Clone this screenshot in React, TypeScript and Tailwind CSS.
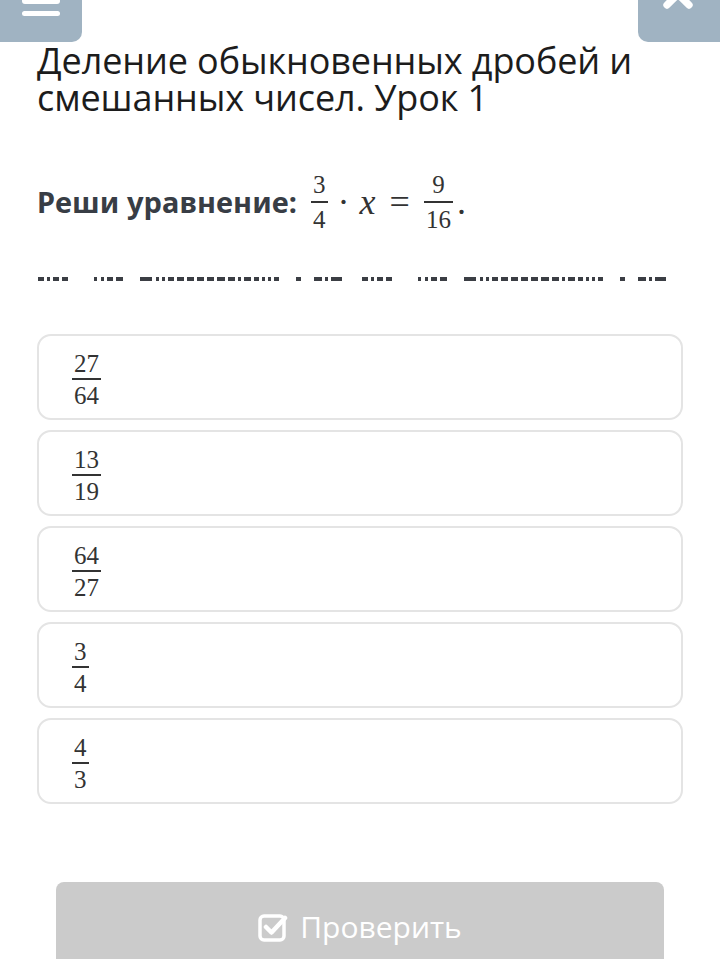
import { X } from "lucide-react";

const dashes: [number, number][] = [
  [0, 6], [9, 3], [15, 6], [24, 6], [56, 3], [63, 3], [69, 6], [78, 7],
  [102, 12], [118, 3], [124, 3], [130, 6], [139, 7], [149, 7], [159, 7],
  [169, 7], [179, 8], [190, 7], [200, 3], [206, 7], [216, 5], [224, 3],
  [230, 3], [236, 5], [258, 5], [276, 8], [287, 3], [293, 11],
];

const options = [
  ["27", "64"],
  ["13", "19"],
  ["64", "27"],
  ["3", "4"],
  ["4", "3"],
];

function Frac({ top, bottom, big }: { top: string; bottom: string; big?: boolean }) {
  return (
    <span
      className="inline-flex flex-col items-center align-middle text-[25px] leading-none"
      style={{ fontFamily: '"Liberation Serif", "DejaVu Serif", serif' }}
    >
      <span className={big ? "px-[2px] pb-[2px]" : "px-[2px] pb-[4px]"}>{top}</span>
      <span className="self-stretch border-t-2 border-[#333]" />
      <span className={big ? "px-[2px] pt-[3px]" : "px-[2px] pt-[4px]"}>{bottom}</span>
    </span>
  );
}

function DashRow() {
  return (
    <div className="relative h-[4px] w-[305px]">
      {dashes.map(([x, w], i) => (
        <span
          key={i}
          className="absolute top-0 h-[4px] bg-[#3b3e44]"
          style={{ left: x, width: w }}
        />
      ))}
    </div>
  );
}

export default function App() {
  return (
    <div
      className="relative h-[959px] w-[720px] overflow-hidden bg-white"
      style={{ fontFamily: '"Open Sans", "Noto Sans", sans-serif' }}
    >
      {/* top buttons, half scrolled away */}
      <div className="flex justify-between">
        <div className="relative h-[42px] w-[82px] overflow-hidden rounded-br-[10px] bg-[#a0b3c2]">
          <span className="absolute left-[22px] top-[-2px] h-[6px] w-[38px] rounded-sm bg-white" />
          <span className="absolute left-[22px] top-[11px] h-[5px] w-[38px] rounded-sm bg-white" />
        </div>
        <div className="relative h-[42px] w-[82px] overflow-hidden rounded-bl-[10px] bg-[#a0b3c2]">
          <X
            className="absolute left-[40px] top-[-28px] -translate-x-1/2 text-white"
            size={44}
            strokeWidth={4}
          />
        </div>
      </div>

      <div className="px-[37px]">
        <h1 className="text-[36px] leading-[37px] font-normal tracking-[-0.1px] text-[#1c1c1c]">
          Деление обыкновенных дробей и смешанных чисел. Урок 1
        </h1>

        <div className="mt-[56px] flex items-center text-[#383d45]">
          <span className="text-[29px] font-bold tracking-[0.1px]" style={{ fontFamily: '"Noto Sans", "Open Sans", sans-serif' }}>
            Реши уравнение:
          </span>
          <span
            className="ml-[14px] flex items-center text-[36px] text-[#333]"
            style={{ fontFamily: '"Liberation Serif", "DejaVu Serif", serif' }}
          >
            <Frac top="3" bottom="4" />
            <span className="mx-[10px]">·</span>
            <span className="italic">x</span>
            <span className="mx-[14px]">=</span>
            <Frac top="9" bottom="16" />
            <span className="ml-[4px]">.</span>
          </span>
        </div>

        <div className="mt-[45px] flex gap-[19px] pl-[1px]">
          <DashRow />
          <DashRow />
        </div>

        <div className="mt-[53px] flex flex-col gap-[10px] w-[646px]">
          {options.map(([a, b], i) => (
            <div
              key={i}
              className="flex h-[86px] items-center rounded-[14px] border-2 border-[#e4e4e4] pl-[33px] pt-[4px] text-[#333]"
            >
              <Frac top={a} bottom={b} big />
            </div>
          ))}
        </div>
      </div>

      <div className="mt-[78px] flex justify-center">
        <button className="flex h-[90px] w-[608px] items-start justify-center gap-[12px] rounded-t-[8px] bg-[#cbcbcb] pt-[22px] text-[30px] text-white">
          <svg width="30" height="30" viewBox="0 0 30 30" className="mt-[8px]" fill="none">
            <rect x="2" y="4" width="24" height="24" rx="4" stroke="white" strokeWidth="3.5" />
            <path d="M8 15 L13.5 20.5 L27 6" stroke="white" strokeWidth="4.5" strokeLinecap="round" strokeLinejoin="round" />
          </svg>
          <span>Проверить</span>
        </button>
      </div>
    </div>
  );
}
